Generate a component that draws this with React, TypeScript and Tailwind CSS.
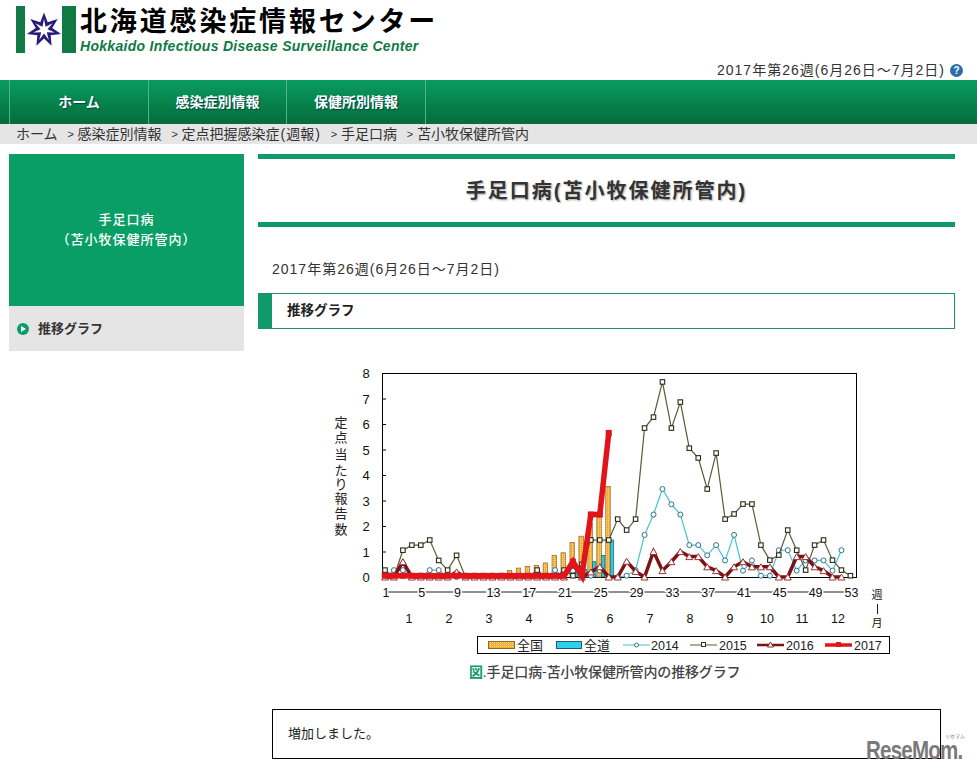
// グラフの座標
const wx = (w: number) => 385 + 8.95 * (w - 1);
const vy = (v: number) => 577 - v * 25.5;
const pts = (data: number[]) => data.map((v, i) => `${wx(i + 1)},${vy(v)}`).join(' ');

const zeros = (n: number) => Array.from({ length: n }, () => 0);

const d2014 = [0, 0.27, 0.27, 0, 0, 0.27, 0.27, 0, ...zeros(9), 0, 0, 0.27, 0, 0.25, 0.27, 0.05, 0.25, 0, 0, 0.05, 0.27, 1.65, 2.45, 3.45, 2.85, 2.45, 1.25, 1.25, 0.85, 1.25, 0.65, 1.65, 0.25, 0.65, 0.05, 0.05, 1.05, 1.05, 0.25, 0.65, 0.65, 0.65, 0.25, 1.05];
const d2015 = [0.27, 0, 1.05, 1.25, 1.25, 1.45, 0.65, 0.27, 0.85, ...zeros(8), 0.27, 0, 0, 0.27, 0.05, 0.5, 1.45, 1.45, 1.45, 2.27, 1.84, 2.27, 5.84, 6.27, 7.65, 5.84, 6.86, 5.05, 4.67, 3.45, 4.86, 2.27, 2.47, 2.86, 2.86, 1.25, 0.66, 0.86, 1.84, 1.05, 0.27, 1.25, 1.45, 0.66, 0.27, 0.05];
const d2016 = [0, 0, 0.6, 0, 0, 0, 0, 0, 0.2, ...zeros(12), 0.5, 0, 0.2, 0.4, 0, 0, 0.62, 0.22, 0, 1, 0.25, 0.6, 1, 0.8, 0.8, 0.4, 0.25, 0, 0.4, 0.6, 0.4, 0.4, 0.4, 0, 0, 0.8, 0.8, 0.4, 0.25, 0, 0];
const d2017 = [...Array.from({ length: 21 }, () => 0.05), 0.6, 0.05, 2.45, 2.45, 5.65];

const zenkoku = [0.15, 0.05, 0.05, 0.05, 0.15, 0.05, 0.05, 0.05, 0.05, 0.05, 0.05, 0.05, 0.1, 0.1, 0.25, 0.35, 0.42, 0.45, 0.55, 0.85, 0.95, 1.35, 1.6, 2.1, 2.35, 3.55];
const zendo = [...zeros(21), 0.15, 0.3, 0.6, 0.85, 1.45];

const weeks = [1, 5, 9, 13, 17, 21, 25, 29, 33, 37, 41, 45, 49, 53];
const months: [string, number][] = [['1', 409], ['2', 449], ['3', 489], ['4', 529], ['5', 570], ['6', 610], ['7', 650], ['8', 690], ['9', 730], ['10', 767], ['11', 802], ['12', 838]];
const yTitle: [string, number][] = [['定', 422], ['点', 437], ['当', 454], ['た', 470], ['り', 484], ['報', 498], ['告', 513], ['数', 529]];

function Chart() {
  return (
    <svg width="570" height="295" viewBox="322 365 570 295" className="block ml-[64px] mt-[36px]" style={{ fontFamily: '"Liberation Sans", "Noto Sans CJK JP", sans-serif' }}>
      <defs>
        <pattern id="hatch" width="2" height="2" patternUnits="userSpaceOnUse">
          <rect width="2" height="2" fill="#f7ae35" />
          <rect width="1" height="1" fill="#ffdc86" />
        </pattern>
      </defs>
      <rect x="382.5" y="373.5" width="474" height="204" fill="#fff" stroke="#000" />
      {[1, 2, 3, 4, 5, 6, 7, 8].map((v) => (
        <line key={v} x1="382" x2="386" y1={vy(v) + 0.5} y2={vy(v) + 0.5} stroke="#000" />
      ))}
      {[0, 1, 2, 3, 4, 5, 6, 7, 8].map((v) => (
        <text key={v} x="366" y={vy(v) + 5} fontSize="13" textAnchor="middle" fill="#111">{v}</text>
      ))}
      {yTitle.map(([c, y]) => (
        <text key={c} x="341" y={y + 5} fontSize="13" textAnchor="middle" fill="#222">{c}</text>
      ))}

      {zenkoku.map((v, i) => (
        <rect key={i} x={wx(i + 1) - 3} y={vy(v)} width="4.5" height={v * 25.5} fill="url(#hatch)" stroke="#8c6a2a" strokeWidth="0.7" />
      ))}
      {zendo.map((v, i) => v > 0 && (
        <rect key={i} x={wx(i + 1) + 1.5} y={vy(v)} width="3.5" height={v * 25.5} fill="#35c6de" stroke="#1c5f74" strokeWidth="0.7" />
      ))}

      <polyline points={pts(d2014)} fill="none" stroke="#45c4cc" strokeWidth="1.2" />
      {d2014.map((v, i) => (
        <circle key={i} cx={wx(i + 1)} cy={vy(v)} r="2.5" fill="#fff" stroke="#2f6f92" />
      ))}
      <polyline points={pts(d2015)} fill="none" stroke="#5c5a3a" strokeWidth="1.2" />
      {d2015.map((v, i) => (
        <rect key={i} x={wx(i + 1) - 2.25} y={vy(v) - 2.25} width="4.5" height="4.5" fill="#fff" stroke="#2b2b14" strokeWidth="1.1" />
      ))}
      <polyline points={pts(d2016)} fill="none" stroke="#7c1214" strokeWidth="3.5" />
      {d2016.map((v, i) => (
        <path key={i} d={`M${wx(i + 1)} ${vy(v) - 3}l3.5 6h-7z`} fill="#fff" stroke="#9c3436" />
      ))}
      <polyline points={pts(d2017)} fill="none" stroke="#e1141c" strokeWidth="5.5" />
      {d2017.map((v, i) => (
        <rect key={i} x={wx(i + 1) - 3} y={vy(v) - 3} width="6" height="6" fill="#e1141c" />
      ))}

      <line x1="386" x2="851" y1="592" y2="592" stroke="#222" />
      {weeks.map((w) => (
        <text key={w} x={wx(w) + 1} y="596.5" fontSize="12.5" textAnchor="middle" fill="#111" stroke="#fff" strokeWidth="3" paintOrder="stroke">{w}</text>
      ))}
      {months.map(([m, x]) => (
        <text key={m} x={x} y="623" fontSize="12.5" textAnchor="middle" fill="#111">{m}</text>
      ))}
      <text x="877" y="599" fontSize="11" textAnchor="middle" fill="#111">週</text>
      <line x1="877.5" x2="877.5" y1="604" y2="614" stroke="#222" />
      <text x="877" y="627" fontSize="11" textAnchor="middle" fill="#111">月</text>

      <rect x="477.5" y="636.5" width="412" height="17" fill="#fff" stroke="#000" />
      <rect x="488.5" y="641.5" width="26" height="7" fill="url(#hatch)" stroke="#8c6a2a" />
      <text x="517" y="650" fontSize="13" fill="#222">全国</text>
      <rect x="556.5" y="641.5" width="25" height="7" fill="#2fd0ee" stroke="#1c5f74" />
      <text x="584" y="650" fontSize="13" fill="#222">全道</text>
      <line x1="623" x2="650" y1="645" y2="645" stroke="#45c4cc" />
      <circle cx="636.5" cy="645" r="2" fill="#fff" stroke="#2f6f92" />
      <text x="651" y="650" fontSize="12.5" fill="#222">2014</text>
      <line x1="690" x2="717" y1="645" y2="645" stroke="#5c5a3a" />
      <rect x="701.5" y="642.5" width="4" height="4" fill="#fff" stroke="#33331c" />
      <text x="719" y="650" fontSize="12.5" fill="#222">2015</text>
      <line x1="757" x2="784" y1="645" y2="645" stroke="#7c1214" strokeWidth="2.5" />
      <path d="M770.5 642l3 5h-6z" fill="#fff" stroke="#8c2426" />
      <text x="786" y="650" fontSize="12.5" fill="#222">2016</text>
      <line x1="825" x2="852" y1="645" y2="645" stroke="#e1141c" strokeWidth="3.5" />
      <rect x="836" y="642" width="5" height="5" fill="#e1141c" />
      <text x="854" y="650" fontSize="12.5" fill="#222">2017</text>
    </svg>
  );
}

const starPoints = (outer: number, inner: number) =>
  Array.from({ length: 14 }, (_, i) => {
    const r = i % 2 === 0 ? outer : inner;
    const a = (Math.PI * i) / 7 - Math.PI / 2;
    return `${(r * Math.cos(a)).toFixed(2)},${(r * Math.sin(a)).toFixed(2)}`;
  }).join(' ');

// 七光星：紺の星の中に白い星を重ねる
function Crest() {
  return (
    <svg width="36" height="36" viewBox="-18 -18 36 36">
      <polygon points={starPoints(17.5, 8.5)} fill="#2a1a7a" />
      <polygon points={starPoints(11, 3.6)} fill="#fff" />
    </svg>
  );
}

const navItems = [
  { label: 'ホーム', cls: 'w-[140px] border-l' },
  { label: '感染症別情報', cls: 'w-[138px]' },
  { label: '保健所別情報', cls: 'w-[139px]' },
];

function Nav() {
  return (
    <nav className="h-[44px] pl-[9px] flex bg-gradient-to-b from-[#089c62] to-[#066c3a]">
      {navItems.map((n) => (
        <div key={n.label} className={`${n.cls} flex items-center justify-center border-r border-[#4fb48a] text-[14px] font-bold text-white [text-shadow:1px_1px_1px_#044]`}>
          {n.label}
        </div>
      ))}
    </nav>
  );
}

function Crumb() {
  return <span className="ml-[7px] mr-[1px] w-[12px] text-center text-[11px]">&gt;</span>;
}

export default function App() {
  return (
    <div className="relative w-[977px] h-[772px] overflow-hidden bg-white text-[#333] font-['Liberation_Sans','Noto_Sans_CJK_JP',sans-serif]">
      <header className="h-[60px] pt-[6px] pl-[16px] flex">
        <div className="w-[60px] h-[47px] flex items-center justify-center border-l-[9px] border-r-[14px] border-[#0f7a43]">
          <Crest />
        </div>
        <div className="ml-[4px]">
          <div className="text-[27px] leading-[32px] font-bold text-black tracking-[2.85px]">北海道感染症情報センター</div>
          <div className="text-[14px] leading-[16px] font-bold italic text-[#0f7a43] tracking-[0.3px]">Hokkaido Infectious Disease Surveillance Center</div>
        </div>
      </header>
      <div className="h-[20px] pr-[14px] flex items-center justify-end gap-[5px] text-[14px] text-[#333]">
        <span className="tracking-[1px]">2017年第26週(6月26日〜7月2日)</span>
        <span className="w-[13px] h-[13px] rounded-full bg-[#2a6ea8] text-white text-[10px] font-bold leading-[13px] text-center">?</span>
      </div>
      <Nav />
      <div className="h-[20px] pl-[16px] flex items-center bg-[#e5e5e5] text-[14px] leading-[20px] text-[#333]">
        <span>ホーム</span>
        <Crumb />
        <span>感染症別情報</span>
        <Crumb />
        <span>定点把握感染症<span className="px-[1px]">(</span>週報<span className="px-[1px]">)</span></span>
        <Crumb />
        <span>手足口病</span>
        <Crumb />
        <span>苫小牧保健所管内</span>
      </div>

      <div className="mt-[10px] pl-[9px] flex gap-[14px]">
        <aside className="w-[235px] shrink-0">
          <div className="h-[152px] flex items-center justify-center text-center text-[13px] leading-[20px] font-medium tracking-[1px] text-white bg-[#0a9e67]">
            <div>手足口病<br />（苫小牧保健所管内）</div>
          </div>
          <div className="h-[45px] pl-[8px] flex items-center gap-[9px] bg-[#e5e5e5] text-[13px] font-bold text-[#333]">
            <span className="w-[12px] h-[12px] rounded-full bg-[#0a9e67] flex items-center justify-center">
              <span className="ml-[1px] w-0 h-0 border-y-[3px] border-y-transparent border-l-[5px] border-l-white" />
            </span>
            推移グラフ
          </div>
        </aside>

        <main className="w-[697px]">
          <div className="h-[73px] flex items-center justify-center border-y-[5px] border-[#109a6a]">
            <h1 className="text-[20px] font-bold text-[#333] tracking-[2px] [text-shadow:1px_1px_2px_#aaa]">手足口病(苫小牧保健所管内)</h1>
          </div>
          <p className="mt-[32px] ml-[14px] text-[14px] leading-[20px] tracking-[1px] text-[#333]">2017年第26週(6月26日〜7月2日)</p>
          <div className="mt-[14px] h-[36px] flex items-center pl-[15px] border border-[#1f8f79] border-l-[14px] border-l-[#109a6a] text-[13.5px] font-bold text-[#222]">
            推移グラフ
          </div>
          <Chart />
          <p className="mt-[2px] ml-[211px] text-[14px] leading-[20px] font-medium tracking-[-0.15px] text-[#444]">
            <span className="font-bold text-[#109a6a]">図</span>.手足口病-苫小牧保健所管内の推移グラフ
          </p>
          <div className="mt-[27px] ml-[14px] w-[669px] h-[50px] flex items-center pl-[15px] border border-black text-[13px] text-[#222]">
            増加しました。
          </div>
        </main>
      </div>

      {/* 透かしロゴ */}
      <div className="absolute left-[866px] top-[741px] origin-left scale-x-[0.79] text-[#7a7a7a] font-bold text-[26px] leading-[19px] tracking-[-1px] whitespace-nowrap">
        ReseMom.
      </div>
      <div className="absolute left-[945px] top-[733px] text-[5px] leading-[6px] text-[#777]">リセマム</div>
    </div>
  );
}
